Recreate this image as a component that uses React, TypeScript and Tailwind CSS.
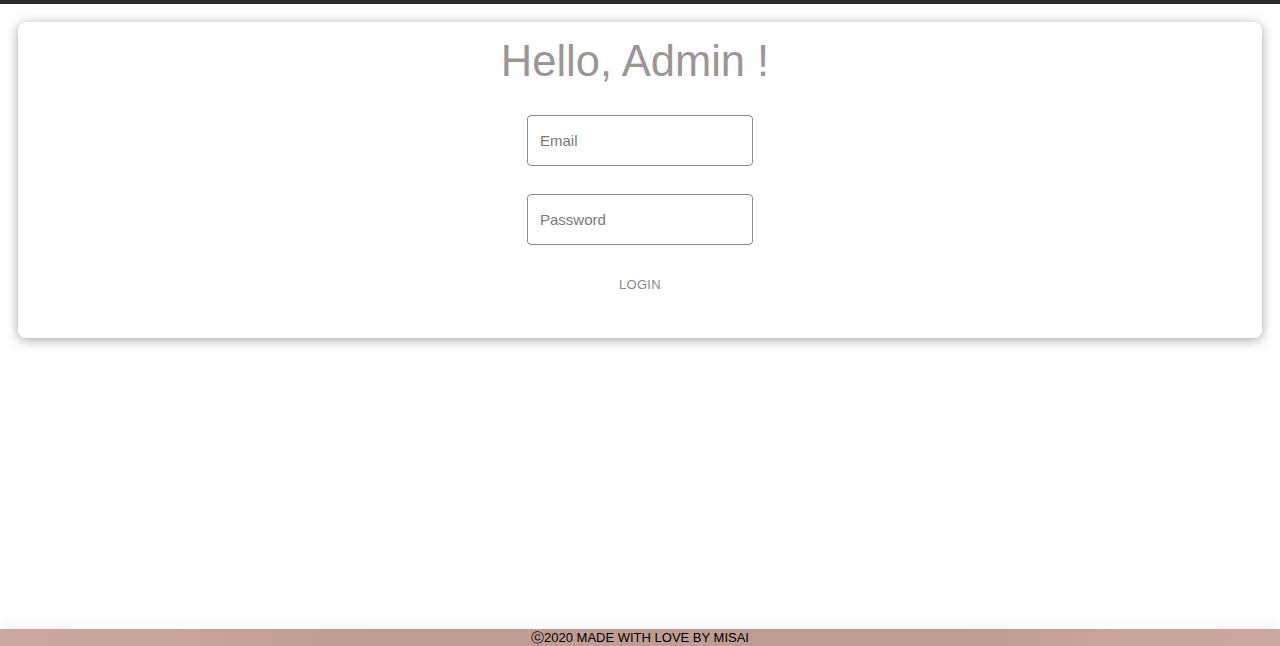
import React from "react";

export default function App() {
  return (
    <div className="relative h-[646px] w-full overflow-hidden bg-white" style={{ fontFamily: '"Liberation Sans", Arial, sans-serif' }}>
      <div className="h-[4px] w-full bg-[#2b2b2b]" />
      <div className="px-[18px] pt-[18px]">
        <div className="flex h-[316px] flex-col items-center rounded-[8px] bg-white shadow-[0_2px_12px_rgba(0,0,0,0.35)]">
          <h1 className="mt-[14px] mr-[10px] text-[43.5px] leading-[50px] text-[#9a9696]">Hello, Admin !</h1>
          <input
            placeholder="Email"
            className="mt-[29px] h-[51px] w-[226px] rounded-[4px] border border-[#8a8a8a] px-[12px] text-[15px] text-[#555] placeholder:text-[#7a7a7a] outline-none"
          />
          <input
            placeholder="Password"
            type="password"
            className="mt-[28px] h-[51px] w-[226px] rounded-[4px] border border-[#8a8a8a] px-[12px] text-[15px] text-[#555] placeholder:text-[#7a7a7a] outline-none"
          />
          <button className="mt-[30px] text-[13px] tracking-[0.3px] text-[#8a8a8a]">LOGIN</button>
        </div>
      </div>
      <footer className="absolute bottom-0 left-0 flex h-[17px] w-full items-center justify-center bg-[linear-gradient(90deg,#caa79e_0%,#c9a69d_12%,#bf9d94_30%,#bf9d94_75%,#c9a69d_88%,#caa79e_100%)] shadow-[0_-8px_16px_rgba(0,0,0,0.03)]">
        <span className="text-[13px] leading-none text-black">ⓒ2020 MADE WITH LOVE BY MISAI</span>
      </footer>
    </div>
  );
}
